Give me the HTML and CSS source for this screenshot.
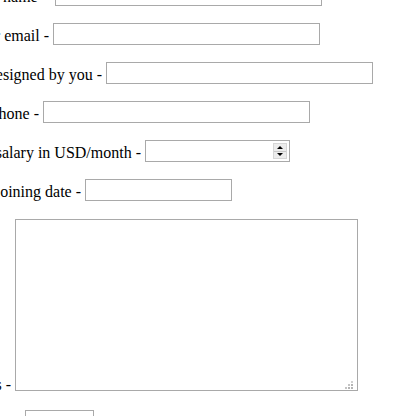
FILE: index.html
```html
<!DOCTYPE html>
<html lang="en">
<head>
<meta charset="utf-8">
<title>Form</title>
<link rel="stylesheet" href="styles.css">
</head>
<body>
<form class="form">
  <div class="row">
    <span class="label w55 wide-gap"><span>Enter your name -</span></span>
    <input class="field text" type="text">
  </div>
  <div class="row">
    <span class="label w53"><span>Enter your email -</span></span>
    <input class="field text" type="text">
  </div>
  <div class="row">
    <span class="label w106"><span>Website designed by you -</span></span>
    <input class="field text" type="text">
  </div>
  <div class="row">
    <span class="label w43"><span>Your phone -</span></span>
    <input class="field text" type="text">
  </div>
  <div class="row">
    <span class="label w145"><span>Expected salary in USD/month -</span></span>
    <div class="field number">
      <input class="number-input" type="text">
      <div class="spin">
        <span class="spin-btn"><span class="tri up"></span></span>
        <span class="spin-btn"><span class="tri down"></span></span>
      </div>
    </div>
  </div>
  <div class="row">
    <span class="label w85"><span>Your joining date -</span></span>
    <input class="field date" type="text">
  </div>
  <div class="row row-area">
    <span class="label w15"><span>Comments -</span></span>
    <textarea class="field area"></textarea>
  </div>
  <div class="row">
    <span class="label w25"><span>Upload file -</span></span>
    <input class="field small" type="text">
  </div>
</form>
</body>
</html>
```
FILE: styles.css
```css
html, body {
  margin: 0;
  padding: 0;
  background: #ffffff;
  overflow: hidden;
}

body {
  font-family: "Liberation Serif", "Times New Roman", serif;
  font-size: 16px;
  color: #000000;
}

.form {
  display: flex;
  flex-direction: column;
  margin-top: -16px;
}

.row {
  display: flex;
  align-items: center;
  height: 22px;
  margin-bottom: 17px;
}

.row-area {
  align-items: flex-end;
  height: 172px;
  margin-top: 1px;
  margin-bottom: 19px;
}

.label {
  display: flex;
  justify-content: flex-end;
  overflow: hidden;
  white-space: nowrap;
  box-sizing: border-box;
  padding-top: 4px;
  padding-right: 4px;
  flex-shrink: 0;
  line-height: normal;
}

.label > span {
  flex-shrink: 0;
}

.row-area .label {
  padding-top: 0;
  margin-bottom: -3px;
}

.wide-gap { padding-right: 8px; }

.w15 { width: 15px; }
.w25 { width: 25px; }
.w43 { width: 43px; }
.w53 { width: 53px; }
.w55 { width: 55px; }
.w85 { width: 85px; }
.w106 { width: 106px; }
.w145 { width: 145px; }

.field {
  box-sizing: border-box;
  height: 22px;
  margin: 0;
  padding: 1px 2px;
  border: 1px solid #a9a9a9;
  background: #ffffff;
  font-family: "Liberation Serif", serif;
  font-size: 13px;
  outline: none;
  flex-shrink: 0;
}

.text { width: 267px; }
.date { width: 147px; }
.small { width: 69px; }

.number {
  display: flex;
  align-items: center;
  width: 145px;
  padding: 0 2px 0 0;
}

.number-input {
  flex: 1;
  min-width: 0;
  height: 18px;
  border: none;
  outline: none;
  padding: 0 2px;
  margin: 0;
  background: transparent;
}

.spin {
  display: flex;
  flex-direction: column;
  width: 14px;
  height: 16px;
  box-sizing: border-box;
  border: 1px solid #d6d6d6;
  background: #ececec;
}

.spin-btn {
  flex: 1;
  display: flex;
  align-items: center;
  justify-content: center;
}

.spin-btn + .spin-btn {
  border-top: 1px solid #c8c8c8;
}

.tri {
  width: 0;
  height: 0;
  border-left: 3px solid transparent;
  border-right: 3px solid transparent;
}

.tri.up { border-bottom: 3px solid #000000; }
.tri.down { border-top: 3px solid #000000; }

.area {
  width: 343px;
  height: 172px;
  resize: none;
  background-color: #ffffff;
  background-image:
    linear-gradient(#b4b4b4, #b4b4b4),
    linear-gradient(#b4b4b4, #b4b4b4),
    linear-gradient(#b4b4b4, #b4b4b4),
    linear-gradient(#c4c4c4, #c4c4c4),
    linear-gradient(#c4c4c4, #c4c4c4),
    linear-gradient(#d0d0d0, #d0d0d0);
  background-size: 2px 2px;
  background-repeat: no-repeat;
  background-origin: border-box;
  background-position:
    right 5px bottom 2px,
    right 8px bottom 2px,
    right 5px bottom 5px,
    right 11px bottom 2px,
    right 8px bottom 5px,
    right 5px bottom 8px;
}
```
